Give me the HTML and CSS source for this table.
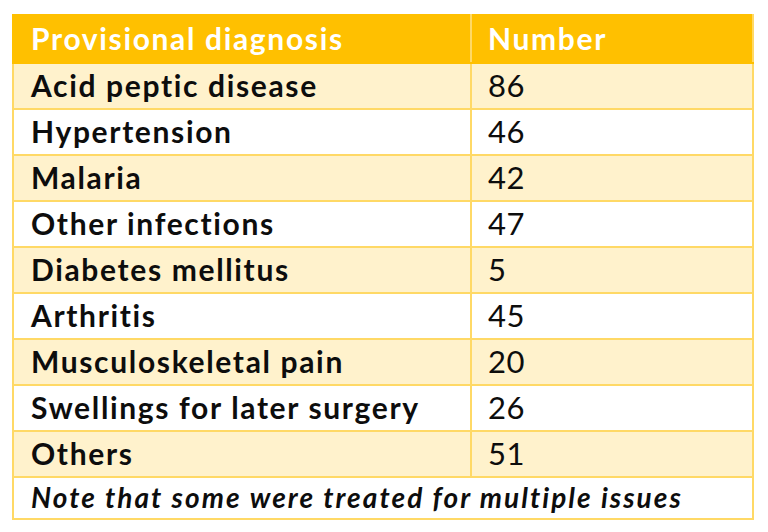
FILE: index.html
```html
<!DOCTYPE html>
<html>
<head>
<meta charset="utf-8">
<link rel="stylesheet" href="styles.css">
</head>
<body>
<table class="dx-table">
  <colgroup><col class="col-name"><col class="col-num"></colgroup>
  <thead>
    <tr class="head"><th>Provisional diagnosis</th><th>Number</th></tr>
  </thead>
  <tbody>
    <tr class="odd"><td>Acid peptic disease</td><td class="num">86</td></tr>
    <tr class="even"><td>Hypertension</td><td class="num">46</td></tr>
    <tr class="odd"><td>Malaria</td><td class="num">42</td></tr>
    <tr class="even"><td>Other infections</td><td class="num">47</td></tr>
    <tr class="odd"><td>Diabetes mellitus</td><td class="num">5</td></tr>
    <tr class="even"><td>Arthritis</td><td class="num">45</td></tr>
    <tr class="odd"><td>Musculoskeletal pain</td><td class="num">20</td></tr>
    <tr class="even"><td>Swellings for later surgery</td><td class="num">26</td></tr>
    <tr class="odd"><td>Others</td><td class="num">51</td></tr>
    <tr class="note"><td colspan="2">Note that some were treated for multiple issues</td></tr>
  </tbody>
</table>
</body>
</html>
```

FILE: styles.css
```css
html, body {
  margin: 0;
  padding: 0;
  background: #ffffff;
}
body {
  padding: 14px 0 0 12px;
  font-family: Lato, "Open Sans", sans-serif;
  font-variant-ligatures: none;
}
.dx-table {
  width: 740px;
  border-collapse: collapse;
  table-layout: fixed;
  border: 2px solid #ffd966;
}
.col-name { width: 458px; }
.col-num { width: 282px; }
.dx-table th,
.dx-table td {
  padding: 0 0 2px 17px;
  text-align: left;
  font-weight: 700;
  font-size: 30px;
  letter-spacing: 1.65px;
  color: #0d0d0d;
  border: 2px solid #ffd966;
  box-sizing: border-box;
  vertical-align: middle;
  white-space: nowrap;
}
.dx-table td.num {
  font-weight: 400;
  font-size: 31px;
  letter-spacing: 0.4px;
  padding-left: 16px;
}
.head th {
  background: #ffc000;
  color: #ffffff;
  height: 48px;
  border-color: #ffc000;
  border-right-color: #ffd966;
}
.head th + th { padding-left: 16px; }
.odd td { background: #fff2cc; height: 46px; }
.even td { background: #ffffff; height: 46px; }
.note td {
  background: #ffffff;
  font-style: italic;
  font-size: 28px;
  letter-spacing: 2.05px;
  height: 42px;
}
```
